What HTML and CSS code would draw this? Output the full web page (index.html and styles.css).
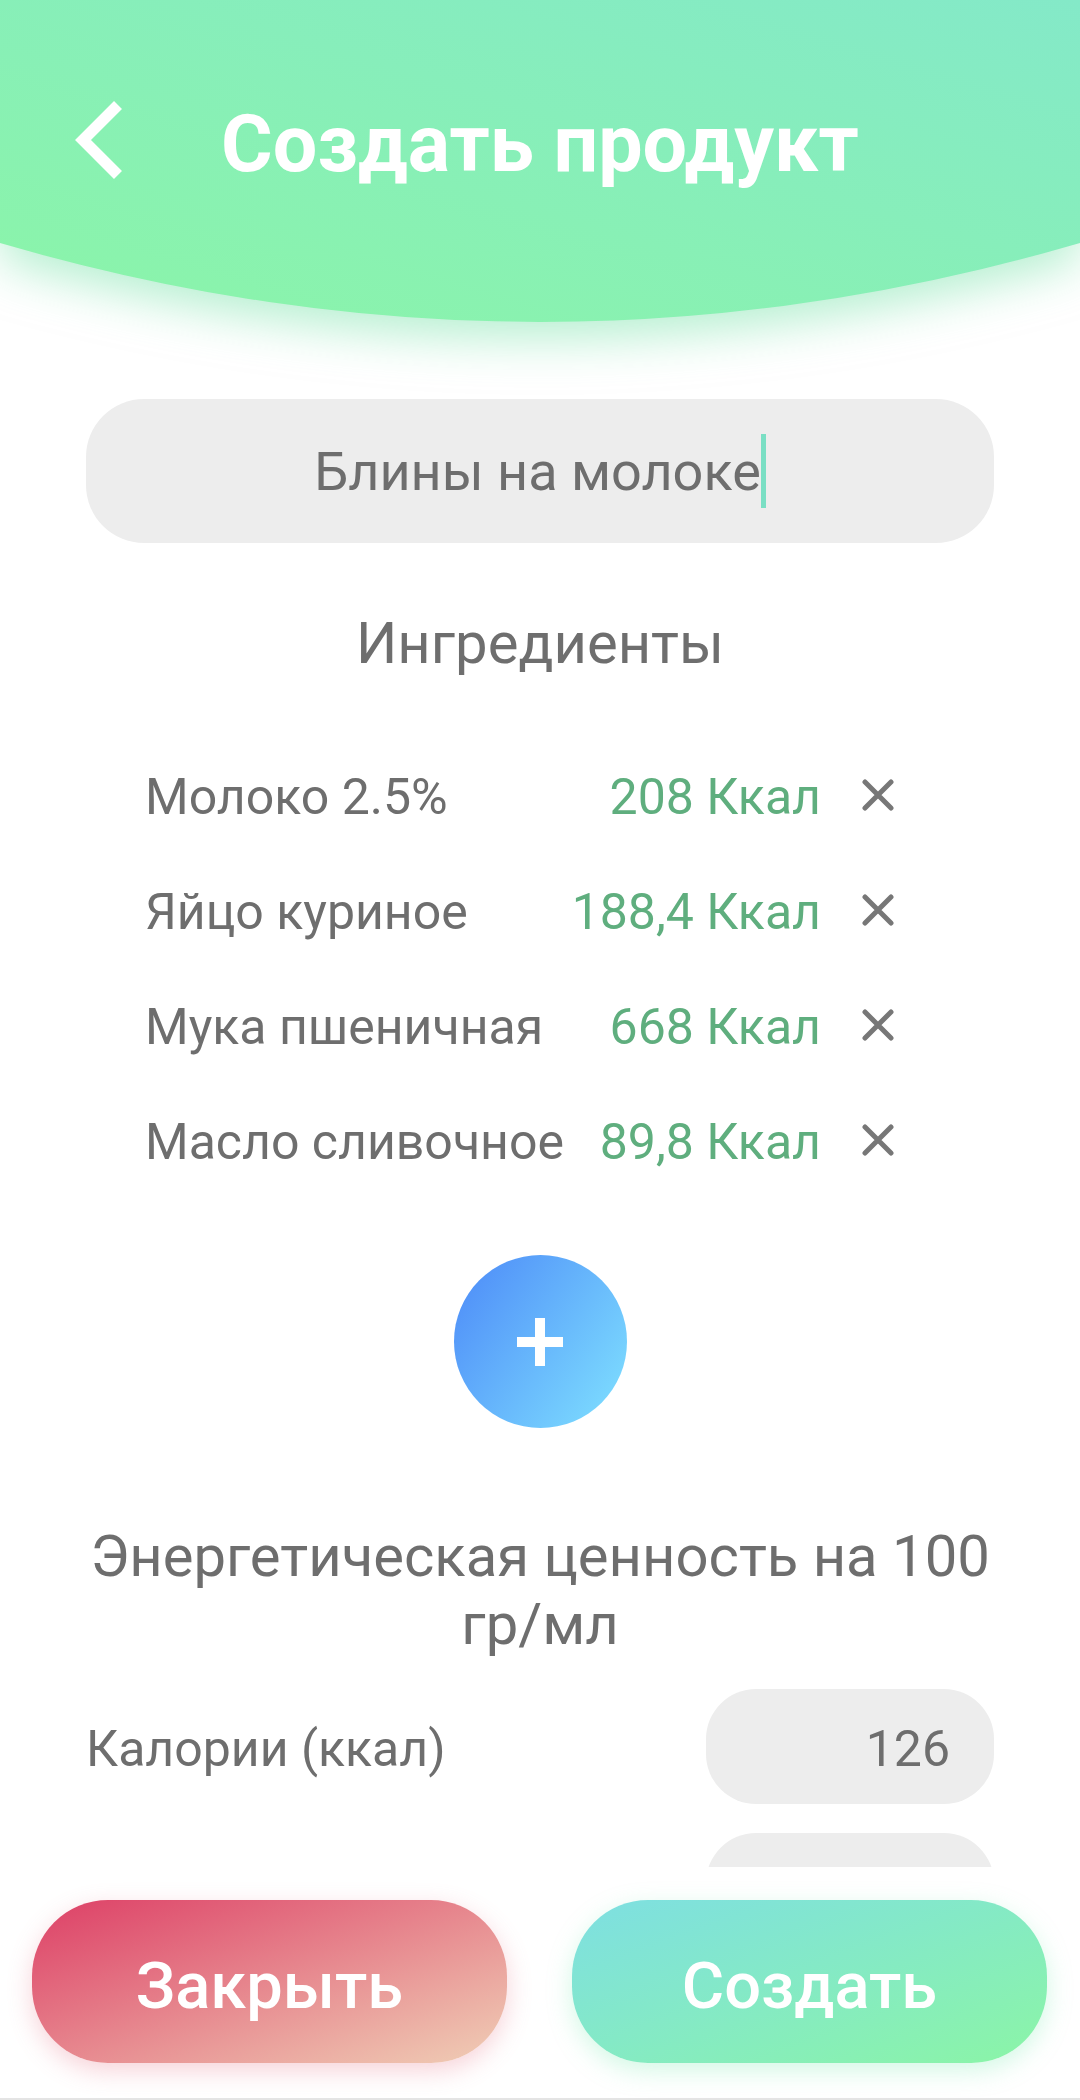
FILE: index.html
```html
<!DOCTYPE html>
<html lang="ru">
<head>
  <meta charset="UTF-8">
  <meta name="viewport" content="width=device-width, initial-scale=1.0">
  <title>Создать продукт</title>
  <link rel="stylesheet" href="styles.css">
</head>
<body>
  <header class="top">
    <svg class="top-bg" viewBox="0 0 1080 420" width="1080" height="420">
      <defs>
        <linearGradient id="top-grad" x1="0" y1="1" x2="1" y2="0">
          <stop offset="0" stop-color="#8bf5a8"/>
          <stop offset="1" stop-color="#84e9c8"/>
        </linearGradient>
      </defs>
      <path d="M0 0H1080V243Q540 401 0 243Z" fill="url(#top-grad)"/>
    </svg>
    <svg class="back" viewBox="0 0 60 90" width="60" height="90">
      <path d="M49 10 L14 45 L49 80" fill="none" stroke="#fff" stroke-width="11.3"/>
    </svg>
    <h1 class="title">Создать продукт</h1>
  </header>

  <main class="content">
    <div class="name-field">
      <span>Блины на молоке</span><span class="caret"></span>
    </div>

    <h2 class="section ingredients-title">Ингредиенты</h2>

    <ul class="ingredients">
      <li class="ingredient">
        <span class="ingredient-name">Молоко 2.5%</span>
        <span class="ingredient-kcal">208 Ккал</span>
        <svg class="remove" viewBox="0 0 32 32" width="32" height="32"><path d="M3 3L29 29M29 3L3 29"/></svg>
      </li>
      <li class="ingredient">
        <span class="ingredient-name">Яйцо куриное</span>
        <span class="ingredient-kcal">188,4 Ккал</span>
        <svg class="remove" viewBox="0 0 32 32" width="32" height="32"><path d="M3 3L29 29M29 3L3 29"/></svg>
      </li>
      <li class="ingredient">
        <span class="ingredient-name">Мука пшеничная</span>
        <span class="ingredient-kcal">668 Ккал</span>
        <svg class="remove" viewBox="0 0 32 32" width="32" height="32"><path d="M3 3L29 29M29 3L3 29"/></svg>
      </li>
      <li class="ingredient">
        <span class="ingredient-name">Масло сливочное</span>
        <span class="ingredient-kcal">89,8 Ккал</span>
        <svg class="remove" viewBox="0 0 32 32" width="32" height="32"><path d="M3 3L29 29M29 3L3 29"/></svg>
      </li>
    </ul>

    <div class="add-wrap">
      <button class="add">
        <svg viewBox="0 0 46 48" width="46" height="48"><path d="M18 0H28V19H46V29H28V48H18V29H0V19H18Z" fill="#fff"/></svg>
      </button>
    </div>

    <h2 class="section energy-title">Энергетическая ценность на 100 <span class="nowrap">гр/мл</span></h2>

    <div class="energy-row">
      <span class="energy-label">Калории (ккал)</span>
      <span class="energy-value">126</span>
    </div>
    <div class="energy-row">
      <span class="energy-label"></span>
      <span class="energy-value"></span>
    </div>
  </main>

  <footer class="actions">
    <button class="btn btn-close">Закрыть</button>
    <button class="btn btn-create">Создать</button>
  </footer>
</body>
</html>
```

FILE: styles.css
```css
* {
  box-sizing: border-box;
}
html, body {
  margin: 0;
  height: 2100px;
}
body {
  width: 1080px;
  background: #fff;
  color: #6e6e6e;
  font-family: Roboto, sans-serif;
  display: flex;
  flex-direction: column;
  overflow: hidden;
}

/* header */
.top {
  position: relative;
  height: 322px;
  flex: none;
  display: flex;
  align-items: flex-start;
  padding: 95px 0 0 69px;
}
.top-bg {
  position: absolute;
  left: 0;
  top: 0;
  overflow: visible;
  filter: drop-shadow(0 16px 24px rgba(120, 225, 170, 0.55));
}
.back {
  position: relative;
  flex: none;
}
.title {
  position: relative;
  margin: 7px 0 0 92px;
  font-size: 79px;
  line-height: 85px;
  font-weight: 700;
  color: #fff;
  white-space: nowrap;
}

/* scroll area */
.content {
  flex: none;
  height: 1545px;
  overflow: hidden;
  padding: 77px 86px 0;
}
.name-field {
  height: 144px;
  border-radius: 58px;
  background: #ededed;
  display: flex;
  align-items: center;
  justify-content: center;
  font-size: 54px;
}
.caret {
  width: 5px;
  height: 74px;
  background: #7adfc4;
}
.section {
  margin: 0;
  font-weight: 400;
  font-size: 58px;
  text-align: center;
}
.ingredients-title {
  margin-top: 68px;
  line-height: 64px;
}
.ingredients {
  list-style: none;
  margin: 64px 0 0;
  padding: 0 0 0 59px;
}
.ingredient {
  height: 115px;
  display: flex;
  align-items: center;
  font-size: 50px;
}
.ingredient-name {
  flex: 1;
}
.ingredient-kcal {
  color: #5fae7e;
}
.remove {
  flex: none;
  margin: 0 100px 3px 41px;
}
.remove path {
  fill: none;
  stroke: #777;
  stroke-width: 5;
  stroke-linecap: round;
}
.add-wrap {
  display: flex;
  justify-content: center;
  margin-top: 56px;
}
.add {
  width: 173px;
  height: 173px;
  padding: 0;
  border: none;
  border-radius: 50%;
  background: linear-gradient(125deg, #4c89f8, #80e2ff);
  display: flex;
  align-items: center;
  justify-content: center;
}
.energy-title {
  margin-top: 94px;
  line-height: 68px;
}
.nowrap {
  white-space: nowrap;
}
.energy-row {
  height: 115px;
  margin-top: 29px;
  display: flex;
  align-items: center;
  justify-content: space-between;
  font-size: 50px;
}
.energy-title + .energy-row {
  margin-top: 31px;
}
.energy-label {
  padding-top: 5px;
}
.energy-value {
  width: 288px;
  height: 115px;
  border-radius: 50px;
  background: #ededed;
  display: flex;
  align-items: center;
  justify-content: flex-end;
  padding: 5px 44px 0 0;
}

/* bottom buttons */
.actions {
  flex: 1;
  display: flex;
  gap: 65px;
  padding: 33px 33px 34px 32px;
  border-bottom: 2px solid #e4e4e4;
}
.btn {
  flex: 1;
  height: 163px;
  padding: 8px 0 0;
  border: none;
  border-radius: 76px;
  color: #fff;
  font-family: inherit;
  font-size: 65px;
  font-weight: 500;
}
.btn-close {
  background: linear-gradient(160deg, #dd3f66, #f0cfb6);
  box-shadow: 0 8px 24px rgba(230, 110, 130, 0.3);
}
.btn-create {
  background: linear-gradient(160deg, #7edfe2, #8bf5a6);
  box-shadow: 0 8px 24px rgba(130, 235, 180, 0.35);
}
```
